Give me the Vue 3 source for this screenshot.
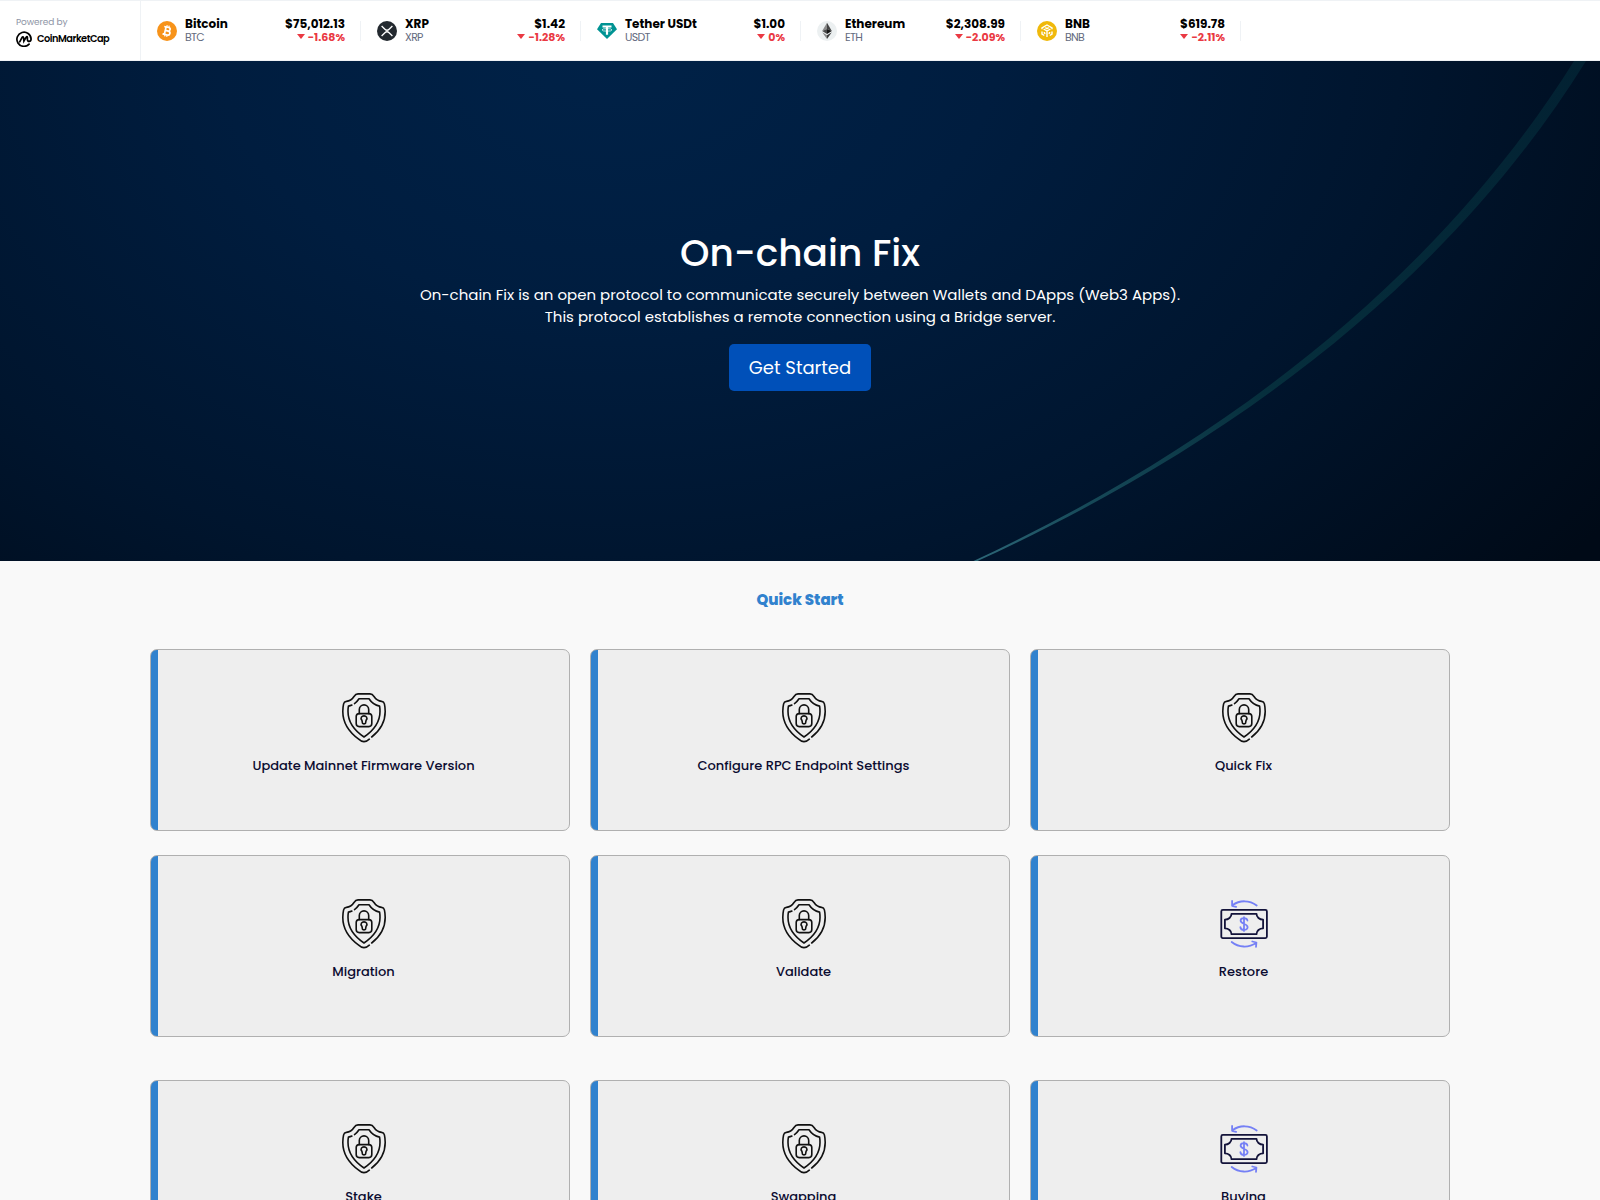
<script setup>
import { ref } from "vue";

const coins = ref([
  { id: "btc", name: "Bitcoin", symbol: "BTC", price: "$75,012.13", change: "-1.68%" },
  { id: "xrp", name: "XRP", symbol: "XRP", price: "$1.42", change: "-1.28%" },
  { id: "usdt", name: "Tether USDt", symbol: "USDT", price: "$1.00", change: "0%" },
  { id: "eth", name: "Ethereum", symbol: "ETH", price: "$2,308.99", change: "-2.09%" },
  { id: "bnb", name: "BNB", symbol: "BNB", price: "$619.78", change: "-2.11%" },
]);

const groups = ref([
  [
    { title: "Update Mainnet Firmware Version", icon: "shield" },
    { title: "Configure RPC Endpoint Settings", icon: "shield" },
    { title: "Quick Fix", icon: "shield" },
    { title: "Migration", icon: "shield" },
    { title: "Validate", icon: "shield" },
    { title: "Restore", icon: "money" },
  ],
  [
    { title: "Stake", icon: "shield" },
    { title: "Swapping", icon: "shield" },
    { title: "Buying", icon: "money" },
  ],
]);
</script>

<template>
  <div class="page">
    <header class="ticker">
      <div class="powered">
        <span class="powered-label">Powered by</span>
        <div class="powered-brand">
          <svg class="brand-icon" viewBox="0 0 16 16">
            <path
              d="M13.100 13.200A7.100 7.100 0 1 1 15.100 8c0 2.900-3.700 3.200-3.700.6V6.300c0-.9-.7-1-1.200-.2L7.900 10 7.500 6.400c-.1-.8-.9-.9-1.300-.2L3.700 10.800"
            />
          </svg>
          <span class="brand-name">CoinMarketCap</span>
        </div>
      </div>
      <div v-for="coin in coins" :key="coin.id" class="coin">
        <svg class="coin-icon" viewBox="0 0 20 20">
          <g v-if="coin.id === 'btc'">
            <circle cx="10" cy="10" r="10" fill="#f7931a" />
            <g transform="rotate(13 10 10)" fill="none" stroke="#fff" stroke-width="1.7">
              <path
                d="M6.300 6.200h4.600c2.400 0 2.400 3.600 0 3.600H8.200h3c2.900 0 2.900 4 0 4H6.300M8.200 6.200v7.600"
              />
              <path d="M8.900 4.300v1.900M11 4.300v1.900M8.900 13.800v1.900M11 13.800v1.900" stroke-width="1.200" />
            </g>
          </g>
          <g v-else-if="coin.id === 'xrp'">
            <circle cx="10" cy="10" r="10" fill="#23292f" />
            <path
              d="M4.600 5l3.300 3.300c1.200 1.200 3 1.200 4.200 0L15.400 5M4.600 15l3.300-3.300c1.200-1.200 3-1.200 4.200 0l3.300 3.300"
              fill="none"
              stroke="#fff"
              stroke-width="1.300"
            />
          </g>
          <g v-else-if="coin.id === 'usdt'">
            <path d="M4 2h12l4 6.200L10 18 0 8.200z" fill="#009393" />
            <path d="M5.500 4.500h9v2h-3.400v7.300H8.900V6.500H5.500z" fill="#fff" />
            <ellipse
              cx="10"
              cy="8.900"
              rx="5"
              ry="1.300"
              fill="none"
              stroke="#fff"
              stroke-width=".7"
            />
          </g>
          <g v-else-if="coin.id === 'eth'">
            <circle cx="10" cy="10" r="10" fill="#ecf0f1" />
            <path d="M10 1.800L5.200 10 10 7.900z" fill="#8a8a8a" />
            <path d="M10 1.800L14.800 10 10 7.900z" fill="#444" />
            <path d="M5.200 10L10 7.900v5z" fill="#4a4a4a" />
            <path d="M14.800 10L10 7.900v5z" fill="#151515" />
            <path d="M5.200 11.200l4.800 3V18z" fill="#888" />
            <path d="M14.800 11.200l-4.800 3V18z" fill="#3b3b3b" />
          </g>
          <g v-else>
            <circle cx="10" cy="10" r="10" fill="#f0b90b" />
            <path
              d="M5 8.200V6.900L10 4l5 2.900v1.300M5 10.500v2.700l2.300 1.300M15 10.500v2.700l-2.300 1.300M6.600 8l3.400 2 3.400-2M10 10v6M8.300 6.700L10 7.700l1.700-1M7.400 10.900v1.200l1 .6M12.600 10.900v1.200l-1 .6"
              fill="none"
              stroke="#fff"
              stroke-width="1.400"
            />
          </g>
        </svg>
        <div class="coin-names">
          <span class="coin-name">{{ coin.name }}</span>
          <span class="coin-symbol">{{ coin.symbol }}</span>
        </div>
        <div class="coin-values">
          <span class="coin-price">{{ coin.price }}</span>
          <span class="coin-change"><i class="arrow-down"></i>{{ coin.change }}</span>
        </div>
      </div>
    </header>

    <section class="hero">
      <svg class="hero-arc" viewBox="0 0 1600 500" preserveAspectRatio="none">
        <defs>
          <linearGradient id="arc" x1="0" y1="1" x2="1" y2="0">
            <stop offset="0" stop-color="#2d6878" />
            <stop offset="0.15" stop-color="#164958" />
            <stop offset="0.4" stop-color="#062f3d" />
            <stop offset="1" stop-color="#022132" />
          </linearGradient>
        </defs>
        <path
          d="M973.500 500C1212 389 1434 224 1574 0H1586C1442 231 1216 391 977.500 500Z"
          fill="url(#arc)"
        />
      </svg>
      <div class="hero-content">
        <h1>On-chain Fix</h1>
        <p>
          On-chain Fix is an open protocol to communicate securely between Wallets and DApps (Web3
          Apps).
        </p>
        <p>This protocol establishes a remote connection using a Bridge server.</p>
        <button class="btn-start">Get Started</button>
      </div>
    </section>

    <main class="quick-start">
      <h2>Quick Start</h2>
      <div v-for="(group, i) in groups" :key="i" class="card-grid">
        <a v-for="card in group" :key="card.title" class="card">
          <svg v-if="card.icon === 'shield'" class="card-icon shield" viewBox="0 0 50 50">
            <path
              d="M30.300 46.200C26.500 49.800 23.500 49.800 19.700 46.200 9 38.300 3.800 29.500 3.800 18.500c0-3 .3-5.500.8-7.600.4-1.700 1.200-2.300 2.700-2.500 3.200-.5 5.700-2 7.500-4.700C16.300 1.500 17.300.9 19 .9h12c1.700 0 2.700.6 4.200 2.800 1.800 2.700 4.300 4.200 7.500 4.700 1.500.2 2.300.8 2.700 2.500.5 2.100.8 4.600.8 7.600 0 10.200-4.300 18.300-13.500 25.500"
            />
            <path
              d="M12.900 12c-1.200.6-2.300.9-3.500 1.100-.3 1.700-.4 3.500-.4 5.400 0 9.500 5 18 16 25.500 11-7.500 16-16 16-25.500 0-1.900-.1-3.700-.4-5.400-4.600-.9-8.200-3.500-10.600-7.300H20c-1.200 1.900-2.700 3.500-4.500 4.800"
            />
            <rect x="17.200" y="20.600" width="15.600" height="13" rx="3" />
            <path d="M20.300 20.600v-4a4.700 4.700 0 0 1 9.400 0v4" />
            <path
              d="M23.500 30.300l-.5-2.700c-2.400-3 .1-4.700 2-4.700s4.400 1.700 2 4.700l-.5 2.700c-.2.700-2.800.7-3 0z"
            />
          </svg>
          <svg v-else class="card-icon money" viewBox="0 0 50 50">
            <g stroke="#13133a">
              <rect x="2.300" y="10.900" width="45.600" height="28.200" rx="1.500" />
              <path
                d="M12.500 14.800h25c0 3.300 3 5.900 6.600 5.900v8.600c-3.600 0-6.600 2.600-6.600 5.900h-25c0-3.300-3-5.900-6.600-5.900v-8.600c3.600 0 6.600-2.600 6.600-5.900z"
              />
            </g>
            <g stroke="#7580f5">
              <path d="M37.700 6.500C30.500.9 20.500.9 13.500 6.300M13.100 2v4.800l4.100 1" />
              <path d="M12.700 43c7 5.700 16.800 6 24.400 1M33.300 42.500l4.100 1-.4 4.300" />
              <path
                d="M28.400 21.500c-.4-3.300-6.800-3.300-6.800 0 0 3.600 7 3 7 6.800 0 3.500-7 3.600-7.200-.2M25 18.200v13.700"
              />
            </g>
          </svg>
          <span class="card-title">{{ card.title }}</span>
        </a>
      </div>
    </main>
  </div>
</template>

<style>
body {
  margin: 0;
  overflow: hidden;
}
</style>

<style scoped>
.page {
  height: 1200px;
  overflow: hidden;
  background: #f9f9f9;
  font-family: Poppins, Inter, "Liberation Sans", sans-serif;
}

.ticker {
  display: flex;
  box-sizing: border-box;
  height: 61px;
  background: #fff;
  border-top: 1px solid #eff2f5;
  border-bottom: 1px solid #eff2f5;
}

.powered {
  box-sizing: border-box;
  width: 141px;
  padding: 14px 0 0 16px;
  border-right: 1px solid #eff2f5;
}

.powered-label {
  display: block;
  font-size: 9px;
  font-weight: 400;
  line-height: 14px;
  letter-spacing: -0.1px;
  color: #8e95a6;
}

.powered-brand {
  display: flex;
  align-items: center;
  gap: 5px;
  margin-top: 2px;
}

.brand-icon {
  width: 16px;
  height: 16px;
  fill: none;
  stroke: #000;
  stroke-width: 1.7;
  stroke-linecap: round;
}

.brand-name {
  font-size: 9.8px;
  font-weight: 600;
  line-height: 16px;
  letter-spacing: -0.5px;
  color: #000;
}

.coin {
  display: flex;
  align-items: center;
  box-sizing: border-box;
  width: 220px;
  height: 20px;
  margin-top: 20px;
  padding: 0 15px 0 16px;
  border-right: 1px solid #eff2f5;
}

.coin-icon {
  width: 20px;
  height: 20px;
  margin-right: 8px;
}

.coin-names,
.coin-values {
  display: flex;
  flex-direction: column;
  margin-top: -2px;
}

.coin-values {
  margin-left: auto;
  text-align: right;
}

.coin-name,
.coin-price {
  font-size: 12px;
  font-weight: 700;
  line-height: 14px;
  color: #000;
}

.coin-symbol {
  font-size: 11px;
  font-weight: 400;
  line-height: 13px;
  letter-spacing: -0.7px;
  color: #646b80;
}

.coin-change {
  font-size: 11px;
  font-weight: 700;
  line-height: 13px;
  color: #ea3943;
}

.arrow-down {
  display: inline-block;
  margin-right: 3px;
  border: 4px solid transparent;
  border-top: 5px solid #ea3943;
  border-bottom: 0;
  vertical-align: 2px;
}

.hero {
  position: relative;
  display: flex;
  justify-content: center;
  height: 500px;
  background: radial-gradient(
    1220px 840px at 38% -4%,
    #002248 0%,
    #001d3f 32%,
    #00152e 65%,
    #000a17 100%
  );
}

.hero-arc {
  position: absolute;
  inset: 0;
  width: 100%;
  height: 100%;
}

.hero-content {
  position: relative;
  padding-top: 168px;
  text-align: center;
  color: #fff;
}

.hero h1 {
  margin: 0 0 7px;
  font-size: 37.5px;
  font-weight: 500;
  line-height: 48px;
}

.hero p {
  margin: 0;
  font-size: 15px;
  line-height: 22px;
  white-space: nowrap;
}

.btn-start {
  width: 142px;
  height: 47px;
  margin-top: 16px;
  padding: 0;
  border: 0;
  border-radius: 5px;
  background: #0050b9;
  font-family: inherit;
  font-size: 18px;
  color: #fff;
}

.quick-start {
  width: 1300px;
  margin: 0 auto;
}

.quick-start h2 {
  margin: 0;
  padding: 27px 0 37px;
  font-size: 15px;
  font-weight: 800;
  line-height: 24px;
  text-align: center;
  color: #3182ce;
}

.card-grid {
  display: grid;
  grid-template-columns: repeat(3, 1fr);
  gap: 24px 20px;
  margin-bottom: 43px;
}

.card {
  display: flex;
  flex-direction: column;
  align-items: center;
  box-sizing: border-box;
  height: 182px;
  padding: 43px 0 0 8px;
  border: 1px solid #b0b0b0;
  border-radius: 7px;
  background: linear-gradient(90deg, #3182ce 7px, #eee 7px);
}

.card-icon {
  width: 50px;
  height: 50px;
  fill: none;
  stroke-linejoin: round;
  stroke-linecap: round;
}

.shield {
  stroke: #111;
  stroke-width: 1.6;
}

.money {
  stroke-width: 1.8;
}

.card-title {
  margin: 13px 1px 0 0;
  font-size: 13px;
  font-weight: 500;
  line-height: 20px;
  color: #0b0b30;
}
</style>
